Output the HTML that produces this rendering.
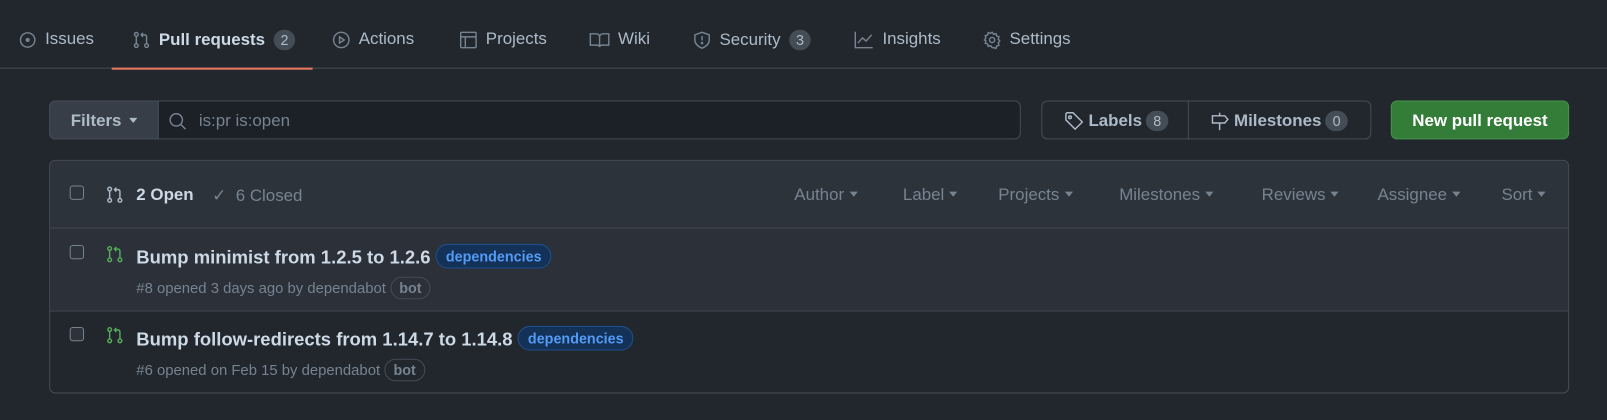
<!DOCTYPE html>
<html><head><meta charset="utf-8"><style>
*{box-sizing:border-box;margin:0;padding:0}
html,body{width:1607px;height:420px;overflow:hidden}
body{background:#22272e;font-family:"Liberation Sans",sans-serif;color:#adbac7;position:relative}
#w{position:absolute;left:0;top:0;width:1568px;height:410px;transform:scale(1.0249);transform-origin:0 0}
.a{position:absolute;white-space:nowrap}
.tab{position:absolute;top:29px;font-size:16.5px;color:#adbac7;display:flex;align-items:center;gap:8px}
.cnt{display:inline-block;background:#444c56;border-radius:12px;font-size:14px;padding:2px 7px;color:#adbac7}
svg{fill:none;stroke:#768390;stroke-width:1.4}
.chk{position:absolute;width:14px;height:14px;border:1.5px solid #768390;border-radius:3px;background:#2d333b}
.dep{display:inline-block;border:1px solid #1f4f8a;background:#143158;color:#539bf5;border-radius:12px;font-size:14px;padding:3px 9px;font-weight:bold}
.bot{display:inline-block;border:1px solid #444c56;color:#768390;border-radius:12px;font-size:14px;padding:2px 8px;font-weight:bold}
.flt{position:absolute;top:181px;font-size:16.5px;color:#768390}
.flt:after{content:"";display:inline-block;margin-left:5px;border:4px solid transparent;border-top:5px solid #768390;vertical-align:-1px}
</style></head><body><div id="w">
<div class="a" style="left:0;top:66px;width:1607px;height:1px;background:#444c56"></div>
<div class="a" style="left:109px;top:66px;width:196px;height:2px;background:#ec775c"></div>
<div class="tab" style="left:18px"><svg width="18" height="18"><circle cx="9" cy="9" r="7"/><circle cx="9" cy="9" r="1.3" fill="#768390"/></svg>Issues</div>
<div class="tab" style="left:129px;color:#cdd9e5;font-weight:bold"><svg width="18" height="18"><circle cx="4" cy="3.5" r="1.8"/><circle cx="4" cy="14.5" r="1.8"/><circle cx="14" cy="14.5" r="1.8"/><path d="M4 5.5v7M14 12.5V6q0-2-2-2H9M10.5 2 8.7 4l1.8 2"/></svg>Pull requests <span class="cnt" style="font-weight:normal">2</span></div>
<div class="tab" style="left:324px"><svg width="18" height="18"><circle cx="9" cy="9" r="7.5"/><path d="M7.3 6v6l4.5-3z"/></svg>Actions</div>
<div class="tab" style="left:448px"><svg width="18" height="18"><rect x="1.5" y="1.5" width="15" height="15" rx="1"/><path d="M1.5 6h15M6 6v10.5"/></svg>Projects</div>
<div class="tab" style="left:575px"><svg width="20" height="18"><path d="M1 3h5q4 0 4 3v10q0-2-3-2H1zM19 3h-5q-4 0-4 3v10q0-2 3-2h6z"/></svg>Wiki</div>
<div class="tab" style="left:676px"><svg width="18" height="18"><path d="M9 1.5 2 4v5q0 5 7 8 7-3 7-8V4z M9 5v4.5"/><circle cx="9" cy="12" r=".6" fill="#768390"/></svg>Security <span class="cnt">3</span></div>
<div class="tab" style="left:833px"><svg width="20" height="18"><path d="M1.5 1v15.5h17M4 12l4.5-5 3.5 3 5.5-6"/></svg>Insights</div>
<div class="tab" style="left:959px"><svg width="18" height="18"><circle cx="9" cy="9" r="2.5"/><path d="M9 1.5l1.5 2 2.3-.7.6 2.3 2.3.7-.7 2.3 1.5 1.9-1.5 1.9.7 2.3-2.3.7-.6 2.3-2.3-.7L9 16.5l-1.5-2-2.3.7-.6-2.3-2.3-.7.7-2.3L1.5 9 3 7.1l-.7-2.3 2.3-.7.6-2.3 2.3.7z"/></svg>Settings</div>

<div class="a" style="left:48px;top:98px;width:948px;height:38px;border:1px solid #444c56;border-radius:6px;background:#1c2128"></div>
<div class="a" style="left:48px;top:98px;width:107px;height:38px;border:1px solid #444c56;border-radius:6px 0 0 6px;background:#373e47;color:#adbac7;font-weight:bold;font-size:16.5px;padding:10px 0 0 20px">Filters <span style="display:inline-block;border:4px solid transparent;border-top:5px solid #adbac7;vertical-align:-1px;margin-left:3px"></span></div>
<svg class="a" style="left:164px;top:109px" width="20" height="20"><circle cx="8" cy="8" r="6"/><path d="M12.5 12.5 17 17"/></svg>
<div class="a" style="left:194px;top:109px;font-size:16.5px;color:#768390">is:pr is:open</div>

<div class="a" style="left:1016px;top:98px;width:322px;height:38px;border:1px solid #444c56;border-radius:6px"></div>
<div class="a" style="left:1159px;top:98px;width:1px;height:38px;background:#444c56"></div>
<div class="a" style="left:1038px;top:108px;font-size:16.5px;font-weight:bold;color:#adbac7;display:flex;align-items:center;gap:4px"><svg width="20" height="20" style="stroke:#adbac7"><path d="M2 3v6l9 9 7-7-9-9H3z"/><circle cx="6" cy="6.5" r="1.3"/></svg>Labels <span class="cnt" style="font-weight:normal">8</span></div>
<div class="a" style="left:1180px;top:108px;font-size:16.5px;font-weight:bold;color:#adbac7;display:flex;align-items:center;gap:4px"><svg width="20" height="20" style="stroke:#adbac7"><path d="M10 2v3M10 12v7M3 5h12l3 3.5-3 3.5H3z"/></svg>Milestones <span class="cnt" style="font-weight:normal">0</span></div>
<div class="a" style="left:1357px;top:98px;width:174px;height:38px;background:#347d39;border:1px solid #46954a;border-radius:6px;color:#fff;font-weight:bold;font-size:16.5px;text-align:center;line-height:39px">New pull request</div>

<div class="a" style="left:48px;top:156px;width:1483px;height:228px;border:1px solid #444c56;border-radius:6px;overflow:hidden">
 <div style="height:66px;background:#2d333b;border-bottom:1px solid #444c56"></div>
 <div style="height:81px;background:#2d333b;border-bottom:1px solid #444c56;opacity:.85"></div>
</div>
<div class="chk" style="left:68px;top:181px"></div>
<svg class="a" style="left:103px;top:181px;stroke:#adbac7" width="18" height="18"><circle cx="4" cy="3.5" r="1.8"/><circle cx="4" cy="14.5" r="1.8"/><circle cx="14" cy="14.5" r="1.8"/><path d="M4 5.5v7M14 12.5V6q0-2-2-2H9M10.5 2 8.7 4l1.8 2"/></svg>
<div class="a" style="left:133px;top:181px;font-size:16.5px;font-weight:bold;color:#cdd9e5">2 Open</div>
<div class="a" style="left:207px;top:181px;font-size:16.5px;color:#768390">✓&nbsp; 6 Closed</div>
<div class="flt" style="left:775px">Author</div>
<div class="flt" style="left:881px">Label</div>
<div class="flt" style="left:974px">Projects</div>
<div class="flt" style="left:1092px">Milestones</div>
<div class="flt" style="left:1231px">Reviews</div>
<div class="flt" style="left:1344px">Assignee</div>
<div class="flt" style="left:1465px">Sort</div>

<div class="chk" style="left:68px;top:239px"></div>
<svg class="a" style="left:103px;top:239px;stroke:#57ab5a" width="18" height="18"><circle cx="4" cy="3.5" r="1.8"/><circle cx="4" cy="14.5" r="1.8"/><circle cx="14" cy="14.5" r="1.8"/><path d="M4 5.5v7M14 12.5V6q0-2-2-2H9M10.5 2 8.7 4l1.8 2"/></svg>
<div class="a" style="left:133px;top:238px;font-size:18px;font-weight:bold;color:#cdd9e5">Bump minimist from 1.2.5 to 1.2.6 <span class="dep" style="vertical-align:2px">dependencies</span></div>
<div class="a" style="left:133px;top:270px;font-size:14.5px;color:#768390">#8 opened 3 days ago by dependabot <span class="bot">bot</span></div>

<div class="chk" style="left:68px;top:319px"></div>
<svg class="a" style="left:103px;top:318px;stroke:#57ab5a" width="18" height="18"><circle cx="4" cy="3.5" r="1.8"/><circle cx="4" cy="14.5" r="1.8"/><circle cx="14" cy="14.5" r="1.8"/><path d="M4 5.5v7M14 12.5V6q0-2-2-2H9M10.5 2 8.7 4l1.8 2"/></svg>
<div class="a" style="left:133px;top:318px;font-size:18px;font-weight:bold;color:#cdd9e5">Bump follow-redirects from 1.14.7 to 1.14.8 <span class="dep" style="vertical-align:2px">dependencies</span></div>
<div class="a" style="left:133px;top:350px;font-size:14.5px;color:#768390">#6 opened on Feb 15 by dependabot <span class="bot">bot</span></div>
</div></body></html>
